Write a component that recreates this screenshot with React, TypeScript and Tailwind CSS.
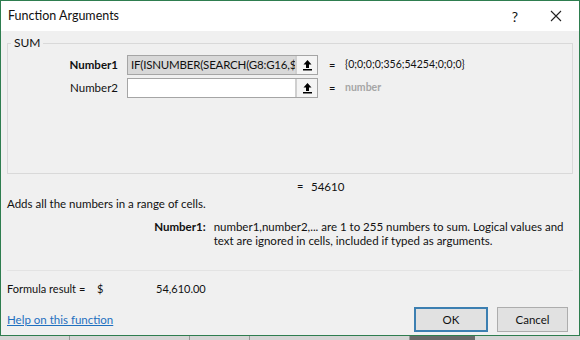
import React from 'react';

function RefIcon() {
  return (
    <svg width="11" height="12" viewBox="0 0 11 12">
      <path d="M5.5 1 L1.5 5.5 H4 V9 H7 V5.5 H9.5 Z" fill="#000" />
      <rect x="1" y="10" width="9" height="1.5" fill="#000" />
    </svg>
  );
}

function ArgRow({ label, bold, value, valueMuted, filled }: { label: string; bold?: boolean; value: string; valueMuted?: boolean; filled?: string }) {
  return (
    <div className="flex items-center h-[20px] mb-[3px]">
      <div className={`w-[119px] text-right pr-[9px] text-[11.5px] ${bold ? 'font-bold' : ''}`}>{label}</div>
      <div className="flex h-[20px] w-[191px] border border-[#a5a5a5] bg-white">
        <div className={`flex-1 overflow-hidden whitespace-nowrap pl-[3px] leading-[18px] text-[11.5px] tracking-[-0.2px] ${filled ? 'bg-[#d8d8d8]' : ''}`}>{filled}</div>
        <div className="w-[22px] flex items-center justify-center border-l-2 border-[#cfcfcf] bg-[#f4f4f4]">
          <RefIcon />
        </div>
      </div>
      <div className="pl-[11px] w-[27px]">=</div>
      <div className={`text-[10.5px] ${valueMuted ? 'text-[#a6a6a6] font-bold' : ''}`}>{value}</div>
    </div>
  );
}

export default function App() {
  return (
    <div className="w-[580px] h-[340px] overflow-hidden bg-[#e6e6e6] relative" style={{ fontFamily: 'Lato, "Noto Sans", sans-serif' }}>
      <div className="h-[336px] flex flex-col border border-[#2e7d4f] bg-[#f0f0f0] text-[11px] text-[#111]">
        <div className="h-[30px] bg-white flex items-center pl-[7px] shrink-0">
          <span className="flex-1 text-[12.5px]">Function Arguments</span>
          <span className="w-[20px] text-[14px] text-center mr-[25px]">?</span>
          <svg width="12" height="12" viewBox="0 0 12 12" className="mr-[17px]">
            <path d="M1 1 L11 11 M11 1 L1 11" stroke="#222" strokeWidth="1.1" />
          </svg>
        </div>
        <div className="flex-1 flex flex-col px-[6px]">
          <fieldset className="border border-[#d9d9d9] h-[138px] mt-[5px] px-[0px] pt-[5px]">
            <legend className="ml-[3px] px-[3px] text-[12px] leading-[14px]">SUM</legend>
            <ArgRow label="Number1" bold filled="IF(ISNUMBER(SEARCH(G8:G16,$" value="{0;0;0;0;356;54254;0;0;0}" />
            <ArgRow label="Number2" value="number" valueMuted />
          </fieldset>
          <div className="pl-[290px] mt-[4px] h-[18px] flex">
            <span className="w-[14px]">=</span>
            <span className="text-[11.5px]">54610</span>
          </div>
          <div className="h-[16px] leading-[16px] text-[11.5px]">Adds all the numbers in a range of cells.</div>
          <div className="flex mt-[8px] text-[11.5px] leading-[14px]">
            <div className="w-[207px] text-right font-bold pr-[8px]">Number1:</div>
            <div className="w-[360px]">number1,number2,... are 1 to 255 numbers to sum. Logical values and text are ignored in cells, included if typed as arguments.</div>
          </div>
          <div className="mt-[22px] border-t border-[#e3e3e3]" />
          <div className="flex mt-[10px] h-[16px] leading-[16px] whitespace-nowrap">
            <span className="w-[90px] shrink-0">Formula result =</span>
            <span className="w-[59px] shrink-0">$</span>
            <span>54,610.00</span>
          </div>
          <div className="flex items-center mt-[10px]">
            <a className="flex-1 text-[#1e6fbf] underline text-[11.5px]">Help on this function</a>
            <button className="w-[74px] h-[25px] border-2 border-[#3c7fb1] bg-[#e1e1e1] mr-[9px] text-[11.5px]">OK</button>
            <button className="w-[71px] h-[25px] border border-[#adadad] bg-[#e1e1e1] mr-[5px] text-[11.5px]">Cancel</button>
          </div>
        </div>
      </div>
      <div className="flex h-[4px] bg-[#d5d5d5]">
        <div className="w-[70px] border-r border-[#9a9a9a]" />
        <div className="w-[120px] border-r border-[#9a9a9a]" />
        <div className="w-[60px] border-r border-[#9a9a9a]" />
        <div className="w-[160px] border-r border-[#9a9a9a]" />
        <div className="w-[65px] bg-[#6a6a6a]" />
      </div>
    </div>
  );
}
